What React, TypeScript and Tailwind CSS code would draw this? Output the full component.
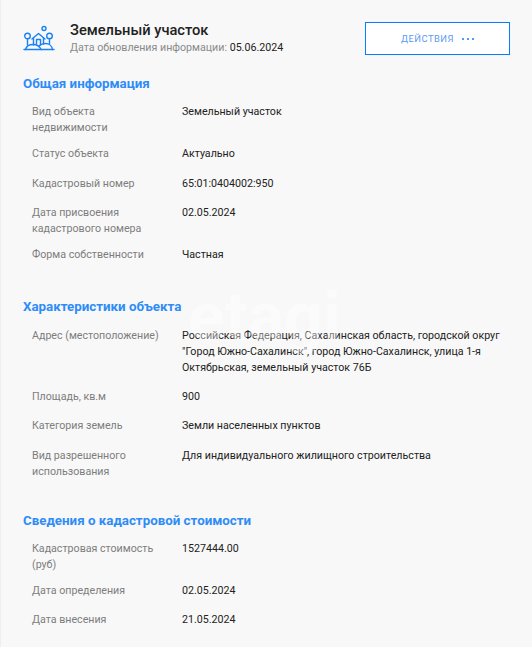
const sections = [
  {
    title: "Общая информация",
    gap: "mb-[22.8px]",
    headGap: "mb-[12px]",
    rows: [
      ["Вид объекта недвижимости", "Земельный участок"],
      ["Статус объекта", "Актуально"],
      ["Кадастровый номер", "65:01:0404002:950"],
      ["Дата присвоения кадастрового номера", "02.05.2024"],
      ["Форма собственности", "Частная"],
    ],
  },
  {
    title: "Характеристики объекта",
    gap: "mb-[23px]",
    headGap: "mb-[12.5px]",
    rows: [
      [
        "Адрес (местоположение)",
        'Российская Федерация, Сахалинская область, городской округ "Город Южно-Сахалинск", город Южно-Сахалинск, улица 1-я Октябрьская, земельный участок 76Б',
        "min-h-[61.2px]",
      ],
      ["Площадь, кв.м", "900"],
      ["Категория земель", "Земли населенных пунктов"],
      ["Вид разрешенного использования", "Для индивидуального жилищного строительства"],
    ],
  },
  {
    title: "Сведения о кадастровой стоимости",
    gap: "mb-0",
    headGap: "mb-[12px]",
    rows: [
      ["Кадастровая стоимость (руб)", "1527444.00"],
      ["Дата определения", "02.05.2024"],
      ["Дата внесения", "21.05.2024"],
    ],
  },
];

function LandIcon() {
  return (
    <svg width="32" height="26" viewBox="0 0 32 26" fill="none" stroke="#1a81f5" strokeWidth="1.4" strokeLinecap="round" strokeLinejoin="round">
      <circle cx="21" cy="3.5" r="2" />
      <circle cx="4.5" cy="11" r="2.8" />
      <circle cx="26.5" cy="11" r="2.8" />
      <path d="M4.5 14v6M26.5 14v5" />
      <path d="M9 14l6.5-5.5L22 14" />
      <path d="M10.5 13v7M20.5 13v6" />
      <path d="M13.5 19v-4.5h4V20" />
      <path d="M1 24.500h30" />
      <path d="M2.500 24.500c1-3.500 4-5 7.500-5s6.500 1.500 8 5" />
      <path d="M16 21c1.500-1.500 4-2.500 6.500-2.500 3.500 0 6.500 2.500 7 6" />
    </svg>
  );
}

export default function App() {
  return (
    <div className="relative h-[647px] w-[532px] overflow-hidden border-l border-[#eeeeee] bg-[#f8f8f8] font-['Roboto',sans-serif] text-[10.667px] leading-[16px] text-[#222222]">
      <div className="flex h-[76px] pl-[22px] pr-[22px] pt-[21px]">
        <div className="w-[47px] pt-[4px]">
          <LandIcon />
        </div>
        <div className="flex-1">
          <div className="text-[14.667px] font-medium leading-[18px]">Земельный участок</div>
          <div className="mt-[1px] text-[#8a8a8a]">
            Дата обновления информации: <span className="text-[#222222]">05.06.2024</span>
          </div>
        </div>
        <button className="mt-[1px] flex h-[33px] w-[145px] items-center justify-center gap-[8px] border border-[#0d7bfa] bg-white text-[9.333px] tracking-[0.5px] text-[#5b9bf5] outline-1 outline-[#eef6ff]">
          ДЕЙСТВИЯ
          <span className="flex gap-[3px]">
            <i className="size-[2px] rounded-full bg-[#0d7bfa]" />
            <i className="size-[2px] rounded-full bg-[#0d7bfa]" />
            <i className="size-[2px] rounded-full bg-[#0d7bfa]" />
          </span>
        </button>
      </div>

      {sections.map((section) => (
        <div key={section.title} className={`${section.gap} pl-[22px] pr-[24px]`}>
          <h2 className={`${section.headGap} text-[13.333px] font-bold leading-[16px] text-[#2e8cf7]`}>{section.title}</h2>
          {section.rows.map(([label, value, height]) => (
            <div key={label} className={`flex ${height ?? "min-h-[29.5px]"} pb-[10px] pl-[9px]`}>
              <div className="w-[150px] shrink-0 pr-[10px] text-[#7d7d7d]">{label}</div>
              <div className="max-w-[320px]">{value}</div>
            </div>
          ))}
        </div>
      ))}

      <div className="pointer-events-none absolute left-[187px] top-[279px] text-[68px] font-bold leading-[76px] text-white/40">
        etagi
      </div>
    </div>
  );
}
